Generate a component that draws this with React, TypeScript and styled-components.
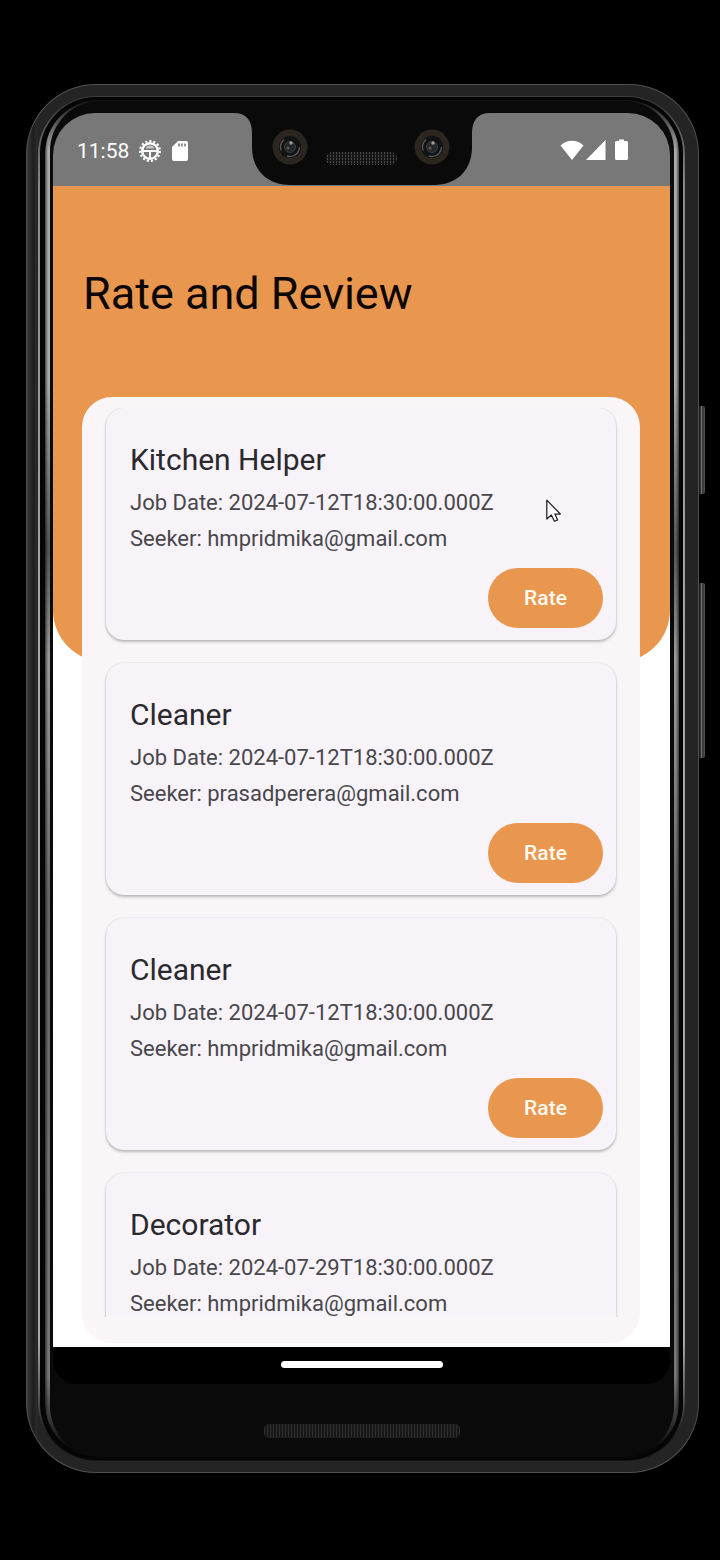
import React from "react";
import styled, { createGlobalStyle } from "styled-components";

const Global = createGlobalStyle`
  *, *::before, *::after { box-sizing: border-box; }
  body { margin: 0; background: #000; font-family: Roboto, "Liberation Sans", sans-serif; }
`;

const Page = styled.div`
  padding: 84px 21px 87px 26px;
  background: #000;
`;

const Phone = styled.div`
  position: relative;
  padding: 1px;
  border-radius: 70px;
  background: #505050;
`;

const SideButton = styled.div<{ $top: number; $height: number }>`
  position: absolute;
  left: 100%;
  top: ${(p) => p.$top}px;
  width: 6px;
  height: ${(p) => p.$height}px;
  border-radius: 0 2px 2px 0;
  background: linear-gradient(90deg, #1c1c1c 0 20%, #777 40%, #333 60%, #555);
`;

const Rail = styled.div`
  padding: 11px 13px 11px 11px;
  border-radius: 69px;
  background: linear-gradient(90deg, #3a3a3a, #1e1e1e 6px, #2a2a2a 10px, transparent 11px),
    #242424;
`;

const OuterGlint = styled.div`
  padding: 1px 2px;
  border-radius: 58px;
  background: linear-gradient(#3a3a3a, #8a8a8a 90px, #a8a8a8 560px, #a8a8a8 calc(100% - 120px), #151515 calc(100% - 20px));
`;

const Groove = styled.div`
  padding: 3px 4px 3px 5px;
  border-radius: 56px;
  background: #050505;
`;

const InnerGlint = styled.div`
  padding: 1px 5px;
  border-radius: 54px;
  background:
    linear-gradient(90deg, rgba(0, 0, 0, 0.6), transparent 3px, transparent calc(100% - 3px), rgba(0, 0, 0, 0.6)),
    linear-gradient(#111, #aaa 50px, #aaa 280px, #555 450px, #999 560px, #888 660px, #666 800px, #777 calc(100% - 80px), #0a0a0a calc(100% - 10px));
`;

const Bezel = styled.div`
  padding: 12px 4px 0 3px;
  border-radius: 50px;
  background: #0a0a0a;
`;

const Screen = styled.div`
  overflow: hidden;
  border-radius: 42px 42px 24px 24px;
  background: #000;
`;

const StatusBar = styled.header`
  display: grid;
  grid-template-columns: 1fr auto 1fr;
  height: 73px;
  background: #787878;
  color: #fff;
`;

const StatusGroup = styled.div<{ $end?: boolean }>`
  display: flex;
  align-items: center;
  justify-content: ${(p) => (p.$end ? "flex-end" : "flex-start")};
  gap: ${(p) => (p.$end ? 2 : 9)}px;
  padding: ${(p) => (p.$end ? "0 42px 0 0" : "2px 0 0 24px")};
  font-size: 21px;
  line-height: 24px;
`;

const NotchArt = styled.svg`
  display: block;
`;

const Content = styled.main`
  display: grid;
  grid-template-rows: 476px auto;
  background: #fff;
`;

const Hero = styled.div`
  grid-area: 1 / 1;
  padding: 78px 30px 0;
  border-radius: 0 0 52px 52px;
  background: #e9964f;
`;

const Heading = styled.h1`
  margin: 0;
  font-size: 45px;
  font-weight: 400;
  line-height: 60px;
  color: #0d0805;
`;

const Sheet = styled.section`
  grid-area: 1 / 1 / 3 / 2;
  margin: 211px 30px 4px 29px;
  padding: 11px 0 26px;
  border-radius: 30px;
  background: #faf6f8;
`;

const List = styled.ul`
  display: flex;
  flex-direction: column;
  gap: 23px;
  height: 909px;
  margin: 0;
  padding: 0 24px;
  overflow-y: auto;
  scrollbar-width: none;
  list-style: none;
`;

const Card = styled.li`
  flex: none;
  display: flex;
  flex-direction: column;
  padding: 32px 13px 12px 24px;
  border-radius: 18px;
  background: #f7f3f9;
  box-shadow: 0 2px 3px rgba(0, 0, 0, 0.24), 0 0 2px rgba(0, 0, 0, 0.12);
`;

const JobTitle = styled.h2`
  margin: 0 0 6px;
  font-size: 30px;
  font-weight: 400;
  line-height: 39px;
  color: #2a292e;
`;

const Detail = styled.p`
  margin: 0;
  font-size: 22px;
  line-height: 36px;
  color: #48474c;
`;

const RateButton = styled.button`
  align-self: flex-end;
  width: 115px;
  height: 60px;
  margin-top: 11px;
  border: 0;
  border-radius: 30px;
  background: #e9964f;
  color: #fffaf0;
  font: 500 21px/30px Roboto, "Liberation Sans", sans-serif;
`;

const NavBar = styled.div`
  display: flex;
  justify-content: center;
  height: 37px;
  padding-top: 14px;
  background: #000;
`;

const Pill = styled.div`
  width: 162px;
  height: 7px;
  border-radius: 4px;
  background: #fff;
`;

const Chin = styled.div`
  display: flex;
  justify-content: center;
  height: 72px;
  padding-top: 40px;
`;

const Speaker = styled.div`
  width: 196px;
  height: 14px;
  border-radius: 5px;
  background: repeating-linear-gradient(90deg, #2c2c2c 0 1px, #191919 1px 3px);
`;

const Pointer = styled.svg`
  position: absolute;
  left: 519px;
  top: 413px;
`;

const Notch = () => (
  <NotchArt width="256" height="73" viewBox="0 0 256 73" aria-hidden="true">
    <defs>
      <pattern id="mesh" width="3" height="3" patternUnits="userSpaceOnUse">
        <rect width="3" height="3" fill="#141414" />
        <rect width="1" height="2" fill="#4a4a4a" />
      </pattern>
    </defs>
    <path d="M0 0C12 0 18 7 18 20V34C18 57 33 72 56 72H200C223 72 238 57 238 34V20C238 7 244 0 256 0Z" fill="#0a0a0a" />
    <rect x="92" y="39" width="71" height="13" rx="6" fill="url(#mesh)" />
    {[56, 198].map((x) => (
      <g key={x}>
        <circle cx={x} cy="34" r="17.5" fill="#2b2620" />
        <circle cx={x} cy="34" r="11" fill="#111214" />
        <circle cx={x} cy="34" r="9.5" fill="none" stroke="#55595b" strokeWidth="1.4" strokeDasharray="18 8 12 22" />
        <circle cx={x} cy="34" r="5.5" fill="#25282a" stroke="#3d4143" />
        <circle cx={x + 1} cy="30" r="1.7" fill="#9a9a9a" />
        <circle cx={x - 2} cy="35" r="1.5" fill="#6b5246" />
      </g>
    ))}
  </NotchArt>
);

const GearIcon = () => (
  <svg width="24" height="24" viewBox="0 0 24 24" fill="none" stroke="#fff" aria-hidden="true">
    <circle cx="12" cy="12" r="9.9" strokeWidth="2.2" strokeDasharray="2.1 2.05" />
    <circle cx="12" cy="12" r="7.8" strokeWidth="2.4" />
    <path d="M5 12H19M12 12V19" strokeWidth="2" />
    <path d="M8 9.5a4 3 0 0 1 8 0z" fill="#fff" stroke="none" opacity=".6" />
  </svg>
);

const SdIcon = () => (
  <svg width="18" height="24" viewBox="0 0 18 24" aria-hidden="true">
    <path d="M7 2H15Q17 2 17 4V20Q17 22 15 22H3Q1 22 1 20V8Z" fill="#fff" />
    <path d="M8 4.500V7.500M11 4.500V7.500M14 4.500V7.500" stroke="#787878" strokeWidth="1.600" />
  </svg>
);

const WifiIcon = () => (
  <svg width="24" height="24" viewBox="0 0 24 24" aria-hidden="true">
    <path d="M0.500 7.500C6.500 1 17.500 1 23.500 7.500L12 22Z" fill="#fff" />
  </svg>
);

const SignalIcon = () => (
  <svg width="20" height="24" viewBox="0 0 20 24" aria-hidden="true">
    <path d="M19.500 2V22H0Z" fill="#fff" />
  </svg>
);

const BatteryIcon = () => (
  <svg width="20" height="24" viewBox="0 0 20 24" aria-hidden="true">
    <path d="M11 1.500H16V3H18.500Q20 3 20 4.500V20.500Q20 22 18.500 22H8.500Q7 22 7 20.500V4.500Q7 3 8.500 3H11Z" fill="#fff" />
  </svg>
);

const jobs = [
  { title: "Kitchen Helper", date: "2024-07-12T18:30:00.000Z", seeker: "hmpridmika@gmail.com", rateable: true },
  { title: "Cleaner", date: "2024-07-12T18:30:00.000Z", seeker: "prasadperera@gmail.com", rateable: true },
  { title: "Cleaner", date: "2024-07-12T18:30:00.000Z", seeker: "hmpridmika@gmail.com", rateable: true },
  { title: "Decorator", date: "2024-07-29T18:30:00.000Z", seeker: "hmpridmika@gmail.com", rateable: false },
];

export default function App() {
  return (
    <>
      <Global />
      <Page>
        <Phone>
          <SideButton $top={322} $height={88} />
          <SideButton $top={499} $height={175} />
          <Rail>
            <OuterGlint>
              <Groove>
                <InnerGlint>
                  <Bezel>
                    <Screen>
                      <StatusBar>
                        <StatusGroup>
                          <span>11:58</span>
                          <GearIcon />
                          <SdIcon />
                        </StatusGroup>
                        <Notch />
                        <StatusGroup $end>
                          <WifiIcon />
                          <SignalIcon />
                          <BatteryIcon />
                        </StatusGroup>
                      </StatusBar>
                      <Content>
                        <Hero>
                          <Heading>Rate and Review</Heading>
                        </Hero>
                        <Sheet>
                          <List>
                            {jobs.map((job, i) => (
                              <Card key={i}>
                                <JobTitle>{job.title}</JobTitle>
                                <Detail>Job Date: {job.date}</Detail>
                                <Detail>Seeker: {job.seeker}</Detail>
                                {job.rateable && <RateButton type="button">Rate</RateButton>}
                              </Card>
                            ))}
                          </List>
                        </Sheet>
                      </Content>
                      <NavBar>
                        <Pill />
                      </NavBar>
                    </Screen>
                    <Chin>
                      <Speaker />
                    </Chin>
                  </Bezel>
                </InnerGlint>
              </Groove>
            </OuterGlint>
          </Rail>
          <Pointer width="18" height="26" viewBox="0 0 20 28" aria-hidden="true">
            <path d="M2 3V24L7 19.500L10.500 26.500L14 25L11 18.500H17Z" fill="#fff" stroke="#222" strokeWidth="1.400" strokeLinejoin="round" />
          </Pointer>
        </Phone>
      </Page>
    </>
  );
}
